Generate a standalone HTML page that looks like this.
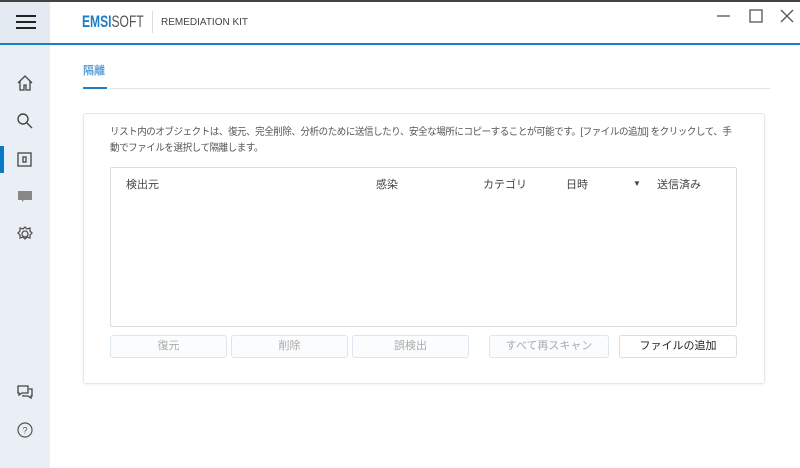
<!DOCTYPE html>
<html><head><meta charset="utf-8"><style>
*{margin:0;padding:0;box-sizing:border-box}
body{width:800px;height:468px;overflow:hidden;background:#fff;font-family:"Liberation Sans","Noto Sans CJK JP",sans-serif;position:relative;color:#333}
.top{position:absolute;left:0;top:0;width:800px;height:2px;background:#444}
.side{position:absolute;left:0;top:2px;width:50px;height:466px;background:#e9eff5}
.side .hb{position:absolute;left:0;top:0;width:50px;height:42px;background:#e3eaf1}
.hdrline{position:absolute;left:0;top:43px;width:800px;height:2px;background:#1a7fc8}
.ic{position:absolute;left:16px}
.act{position:absolute;left:0;top:146px;width:4px;height:27px;background:#0a78c8}
.logo{position:absolute;left:82px;top:12px;font-size:17px;font-weight:bold;color:#1a7fc8;white-space:nowrap;transform:scaleX(0.71);transform-origin:left}
.logo span{color:#555;font-weight:normal}
.sep{position:absolute;left:152px;top:11px;width:1px;height:22px;background:#ddd}
.kit{position:absolute;left:161px;top:17px;font-size:10px;color:#444;white-space:nowrap}
.tab{position:absolute;left:83px;top:62px;font-size:11px;font-weight:bold;color:#5a9fd6}
.tabul{position:absolute;left:83px;top:87px;width:24px;height:2px;background:#1a7fc8}
.tabline{position:absolute;left:110px;top:88px;width:660px;height:1px;background:#e4e4e4}
.card{position:absolute;left:83px;top:113px;width:682px;height:271px;border:1px solid #e6e6e6;border-radius:3px;box-shadow:0 1px 2px rgba(0,0,0,.06)}
.desc{position:absolute;left:110px;top:125px;font-size:10px;line-height:16px;color:#555;white-space:nowrap;letter-spacing:-0.45px;transform:scaleX(0.95);transform-origin:left}
.tbl{position:absolute;left:110px;top:167px;width:627px;height:160px;border:1px solid #ddd;border-radius:2px}
.th{position:absolute;top:176px;font-size:11px;color:#444}
.btn{position:absolute;top:335px;height:23px;border:1px solid #dde6ee;border-radius:3px;font-size:11px;color:#aaa;text-align:center;line-height:21px;background:#fbfcfd}
</style></head><body>
<div class="top"></div>
<div class="side"><div class="hb"></div></div>
<svg style="position:absolute;left:16px;top:14px" width="20" height="16"><path d="M0 2h20M0 8h20M0 14h20" stroke="#222" stroke-width="2"/></svg>
<div class="hdrline"></div>
<div class="act"></div>
<svg class="ic" style="top:74px" width="18" height="18" fill="none" stroke="#444" stroke-width="1.3"><path d="M2 9L9 2l7 7M4 7v9h4v-5h2v5h4V7"/></svg>
<svg class="ic" style="top:112px" width="18" height="18" fill="none" stroke="#444" stroke-width="1.4"><circle cx="7" cy="7" r="5"/><path d="M11 11l5 5"/></svg>
<svg class="ic" style="top:151px" width="18" height="18" fill="none" stroke="#444" stroke-width="1.3"><rect x="2" y="2" width="13" height="13"/><rect x="7" y="6" width="3" height="5"/></svg>
<svg class="ic" style="top:188px" width="18" height="18"><path d="M2 3h14v9H8l-2 2v-2H2z" fill="#888"/></svg>
<svg class="ic" style="top:225px" width="18" height="18" fill="none" stroke="#555" stroke-width="1.3"><circle cx="9" cy="9" r="3"/><path d="M9 2l2 2 3-1 0 3 2 2-2 2 0 3-3-1-2 2-2-2-3 1 0-3-2-2 2-2 0-3 3 1z"/></svg>
<svg class="ic" style="top:383px" width="18" height="18" fill="none" stroke="#444" stroke-width="1.3"><path d="M2 3h10v7H6l-3 2V10H2zM13 6h3v7h-1v2l-3-2H7v-1"/></svg>
<svg class="ic" style="top:421px" width="18" height="18" fill="none" stroke="#555" stroke-width="1.2"><circle cx="9" cy="9" r="7"/><text x="9" y="12.5" font-size="9" text-anchor="middle" fill="#555" stroke="none" font-family="Liberation Sans">?</text></svg>
<div class="logo">EMSI<span>SOFT</span></div>
<div class="sep"></div>
<div class="kit">REMEDIATION KIT</div>
<svg style="position:absolute;left:716px;top:8px" width="80" height="16" fill="none" stroke="#555" stroke-width="1.3"><path d="M1 8h13"/><rect x="34" y="2" width="12" height="12"/><path d="M65 2l12 12M77 2L65 14"/></svg>
<div class="tab">隔離</div>
<div class="tabline"></div><div class="tabul"></div>
<div class="card"></div>
<div class="desc">リスト内のオブジェクトは、復元、完全削除、分析のために送信したり、安全な場所にコピーすることが可能です。[ファイルの追加] をクリックして、手<br>動でファイルを選択して隔離します。</div>
<div class="tbl"></div>
<div class="th" style="left:126px">検出元</div>
<div class="th" style="left:376px">感染</div>
<div class="th" style="left:483px">カテゴリ</div>
<div class="th" style="left:566px">日時</div>
<div class="th" style="left:633px;font-size:8px;top:179px">▼</div>
<div class="th" style="left:657px">送信済み</div>
<div class="btn" style="left:110px;width:117px">復元</div>
<div class="btn" style="left:231px;width:117px">削除</div>
<div class="btn" style="left:352px;width:117px">誤検出</div>
<div class="btn" style="left:489px;width:120px">すべて再スキャン</div>
<div class="btn" style="left:619px;width:118px;color:#222;border-color:#ddd;background:#fff">ファイルの追加</div>
</body></html>
